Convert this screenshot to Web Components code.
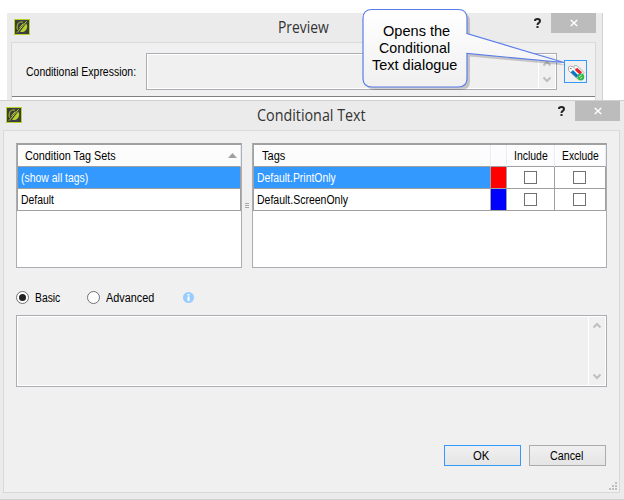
<!DOCTYPE html>
<html lang="en">
<head>
<meta charset="utf-8">
<title>Conditional Text</title>
<style>
html,body{margin:0;width:624px;height:500px;overflow:hidden;background:#fff;font:12px/14px "Liberation Sans",Arial,sans-serif;color:#000}
body{position:relative}
.preview{position:absolute;left:7px;top:13px;width:596px;height:87px}
.main{position:absolute;left:0;top:100px;width:624px;height:400px}
call-out{position:absolute;left:0;top:0}
[slot=title]{font:15.5px/20px "Open Sans","Noto Sans",sans-serif;color:#333}
.expression{display:flex;height:54px;box-sizing:border-box;padding:10px 0 0 14px;border-bottom:1px solid #808080;align-items:flex-start}
.expression .lbl{width:120px;padding-top:12px}
.expression scroll-box{width:411px;height:37px}
.expression tag-button{margin:7px 0 0 7px}
.content{display:flex;flex-direction:column;padding:12px 12px 0;height:349px;box-sizing:border-box}
.tables{display:flex;height:125px}
.options{display:flex;height:47px;align-items:center;box-sizing:border-box;padding-top:12px}
.options radio-item:first-child{width:71px}
.options radio-item+radio-item{width:96px}
.content>scroll-box{height:72px}
.buttons{display:flex;justify-content:flex-end;gap:8px;margin:58px 1px 0 0}
</style>
</head>
<body>
<dialog-window class="preview">
  <fit-text slot="title" w="51">Preview</fit-text>
  <div class="expression">
    <span class="lbl"><fit-text w="110">Conditional Expression:</fit-text></span>
    <scroll-box></scroll-box><tag-button></tag-button>
  </div>
</dialog-window>
<dialog-window class="main" front>
  <fit-text slot="title" w="109">Conditional Text</fit-text>
  <div class="content">
    <div class="tables"><tag-sets></tag-sets><split-grip></split-grip><tag-list></tag-list></div>
    <div class="options">
      <radio-item checked><fit-text w="25">Basic</fit-text></radio-item>
      <radio-item><fit-text w="48">Advanced</fit-text></radio-item>
      <info-icon></info-icon>
    </div>
    <scroll-box></scroll-box>
    <div class="buttons">
      <push-button primary><fit-text w="16">OK</fit-text></push-button>
      <push-button><fit-text w="33">Cancel</fit-text></push-button>
    </div>
  </div>
</dialog-window>
<call-out></call-out>
<script>
const define = (name, html, init) => customElements.define(name, class extends HTMLElement {
  constructor() {
    super();
    this.attachShadow({mode: 'open'}).innerHTML = html;
  }
  connectedCallback() { if (init) init(this); }
});

// Text squeezed horizontally to the width given in "w".
define('fit-text', `<style>:host{display:inline-block;white-space:nowrap;text-align:left}
span{display:inline-block;transform-origin:0 50%}</style><span><slot></slot></span>`, el => {
  const s = el.shadowRoot.querySelector('span'), w = +el.getAttribute('w');
  s.style.transform = `scaleX(${w / s.offsetWidth})`;
  el.style.width = w + 'px';
});

define('app-logo', `<style>:host{display:block;width:16px;height:16px}svg{display:block}</style>
<svg width="16" height="16"><rect x=".5" y=".5" width="15" height="15" fill="#3b3e3f" stroke="#b9d22b"/>
<path d="M12.200 4.500C13.800 6.500 13.500 9.600 11.500 11.500 9.900 13.100 7.700 13.400 6 12.700Z" fill="#b9d22b"/>
<path d="M9 3.200C6.500 2.500 4 4 3.300 6.400c-.5 1.600-.2 3 .6 4.200" fill="none" stroke="#8fa32c" stroke-width="1.300"/>
<path d="M12.700 2.200 3 13.700M9.300 4.500 5.500 9" stroke="#b9d22b" stroke-width="1"/></svg>`);

define('dialog-window', `<style>
:host{display:flex;flex-direction:column;box-sizing:border-box;background:#ebebeb;border-right:1px solid #d0d0d0;padding:0 6px 0 4px}
:host([front]){border:0;border-top:1px solid #d0d0d0;border-bottom:1px solid #d0d0d0;padding:0 4px 6px 3px}
header{display:grid;grid-template-columns:1fr 62px;height:29px;flex:none}
app-logo{grid-area:1/1;margin:6px 0 0 3px}
.t{grid-area:1/1/2/3;justify-self:center;padding:4px 1px 0 0}
.c{grid-area:1/2;display:flex;align-items:flex-start;justify-content:space-between}
.x{display:flex;width:45px;height:20px;background:#bcbcbc;align-items:center;justify-content:center}
.q{margin:5px 0 0 0}
.p{flex:1;min-height:0;background:#f0f0f0;border:1px solid #d9d9d9;position:relative}
:host(:not([front])) .p{border-bottom:0;background:linear-gradient(#f0f0f0 54px,#fff 54px)}
:host([front]) .t{padding-right:0}
.g{display:none;position:absolute;right:2px;bottom:2px}
:host([front]) .g{display:block}
</style>
<header><app-logo></app-logo><div class="t"><slot name="title"></slot></div>
<div class="c"><svg class="q" width="8" height="11"><path d="M1 3V2.500Q1 1 3.500 1T6 3Q6 4 4.800 4.800 3.500 5.600 3.500 7" fill="none" stroke="#222" stroke-width="2"/><path d="M2.500 8h2v2h-2z" fill="#222"/></svg>
<div class="x"><svg width="8" height="8"><path d="M.8 1 7.200 7M7.200 1 .8 7" stroke="#fff" stroke-width="1.500"/></svg></div></div></header>
<div class="p"><slot></slot><svg class="g" width="8" height="8" fill="#bfbfbf" shape-rendering="crispEdges"><path d="M6 0h2v2H6zM3 3h2v2H3zM6 3h2v2H6zM0 6h2v2H0zM3 6h2v2H3zM6 6h2v2H6z"/></svg></div>`);

define('scroll-box', `<style>
:host{display:flex;box-sizing:border-box;border:1px solid #abadb3;box-shadow:inset 0 0 0 1px #fff;padding:1px;justify-content:flex-end;background:#f0f0f0}
.b{width:16px;border-left:1px solid #fff;display:flex;flex-direction:column;justify-content:space-between;align-items:center;padding:5px 0;box-sizing:content-box}
svg{display:block}</style>
<div class="b"><svg width="8" height="7"><path d="M.5 5.500 4 2l3.500 3.500" fill="none" stroke="#bfbfbf" stroke-width="2"/></svg>
<svg width="8" height="7"><path d="M.5 1.500 4 5l3.500-3.500" fill="none" stroke="#bfbfbf" stroke-width="2"/></svg></div>`);

define('tag-button', `<style>:host{display:block;flex:none;box-sizing:border-box;width:23px;height:23px;border:1px solid #39f;background:#f0f0f0}svg{display:block}</style>
<svg width="21" height="21" fill="none">
<path d="M8.500 6.500 9.500 4.500 12.500 5 19 11.500 16 15Z" fill="#fff" stroke="#aaa"/>
<path d="M3.500 8V6L5.500 5 8.500 6 16 14 12.500 18 4 10Z" fill="#fff" stroke="#aaa"/>
<path d="m11 7.800 5 4.700" stroke="#e61e28" stroke-width="3.200"/><path d="m6.800 10.200 5.700 5.500" stroke="#0876c8" stroke-width="3.200"/>
<path d="M5 7.500h1.500" stroke="#777"/><circle cx="15.800" cy="16" r="3.400" fill="#36b54a"/><path d="m13.800 15.800 3-2M15 17.500l2.500-1.500" stroke="#a9e7af"/></svg>`);

const table = `
:host{display:block;box-sizing:border-box;height:125px;border:1px solid #abadb3;border-top-color:#a0a0a0;background:#fff}
.t{display:grid;grid-template-rows:22px 22px 22px;border:1px solid #a0a0a0;border-bottom:0;height:67px;box-sizing:border-box;border-right-width:0}
.t>*{box-sizing:border-box;border-right:1px solid #a0a0a0;border-bottom:1px solid #a0a0a0;display:flex;align-items:center;padding-left:3px}
.t>.h{background:#fcfcfc;border-right-color:#e4ecf7;padding-left:7px;box-shadow:inset 1px 1px #fff}
.sel{background:#39f;color:#fff}`;

define('tag-sets', `<style>${table}:host{width:226px}.t{grid-template-columns:1fr}.t>.h{justify-content:space-between;padding-right:3px}</style>
<div class="t"><div class="h"><fit-text w="91">Condition Tag Sets</fit-text><svg width="9" height="5"><path d="M0 5 4.500 0 9 5z" fill="#a0a0a0"/></svg></div>
<div class="sel"><fit-text w="67">(show all tags)</fit-text></div><div><fit-text w="33">Default</fit-text></div></div>`);

define('split-grip', `<style>:host{display:flex;width:10px;align-items:center;justify-content:center}i{display:block;width:4px;height:5px;background:repeating-linear-gradient(#a8a8a8 0 1px,transparent 1px 2px)}</style><i></i>`);

const cells = '<div class="k"><i></i></div><div class="k"><i></i></div>';
define('tag-list', `<style>${table}:host{width:355px}.t{grid-template-columns:237px 16px 48px 1fr}
.t>.k{padding:0;justify-content:center}i{box-sizing:border-box;width:13px;height:13px;border:1px solid #707070;background:#fff}
.r{background:red}.b{background:#00f}.t>.k:nth-child(4n){padding-right:1px}</style>
<div class="t"><div class="h" style="padding-left:8px"><fit-text w="23">Tags</fit-text></div><div class="h"></div><div class="h"><fit-text w="34">Include</fit-text></div><div class="h"><fit-text w="37">Exclude</fit-text></div>
<div class="sel"><fit-text w="79">Default.PrintOnly</fit-text></div><div class="r"></div>${cells}
<div><fit-text w="91">Default.ScreenOnly</fit-text></div><div class="b"></div>${cells}</div>`);

define('radio-item', `<style>:host{display:flex;align-items:center;gap:6px}svg{display:block}circle+circle{display:none}:host([checked]) circle+circle{display:block}</style>
<svg width="13" height="13"><circle cx="6.500" cy="6.500" r="6" fill="#fff" stroke="#707070"/><circle cx="6.500" cy="6.500" r="3.500" fill="#222"/></svg><slot></slot>`);

define('info-icon', `<style>:host{display:block}svg{display:block}</style>
<svg width="11" height="11"><circle cx="5.500" cy="5.500" r="5.500" fill="#99ccff"/><path d="M4.500 2h2v1.500h-2zM4.500 4.500h2V9h-2z" fill="#fff"/></svg>`);

define('push-button', `<style>:host{display:flex;width:77px;height:21px;box-sizing:border-box;border:1px solid #acacac;background:linear-gradient(#f0f0f0,#e5e5e5);align-items:center;justify-content:center;padding-right:3px}
:host([primary]){border-color:#39f}</style><slot></slot>`);

define('call-out', `<style>:host{display:grid;width:624px;height:100px;pointer-events:none}
svg,.l{grid-area:1/1}
.l{width:104px;margin:22px 0 0 363px;font:15px/17px "Liberation Sans",Arial,sans-serif;text-align:center;display:flex;flex-direction:column;align-items:center;padding-right:2px;box-sizing:border-box;height:51px}
.l :nth-child(1){margin-left:4px}</style>
<svg width="624" height="100"><defs><linearGradient id="g" x2="0" y2="1"><stop stop-color="#fff"/><stop offset="1" stop-color="#f0f0f0"/></linearGradient>
<path id="p" d="M372 9.500H458Q467 9.500 467 18.500V33.500L564 62.500 467 53.500V78.500Q467 87 458 87H372Q363 87 363 78.500V18.500Q363 9.500 372 9.500Z"/></defs>
<use href="#p" x="3" y="3" fill="#000" opacity=".18"/><use href="#p" fill="url(#g)" stroke="#5b7de8" stroke-width="1.200"/></svg>
<div class="l"><fit-text w="67">Opens the</fit-text><fit-text w="71">Conditional</fit-text><fit-text w="85">Text dialogue</fit-text></div>`);
</script>
</body>
</html>
